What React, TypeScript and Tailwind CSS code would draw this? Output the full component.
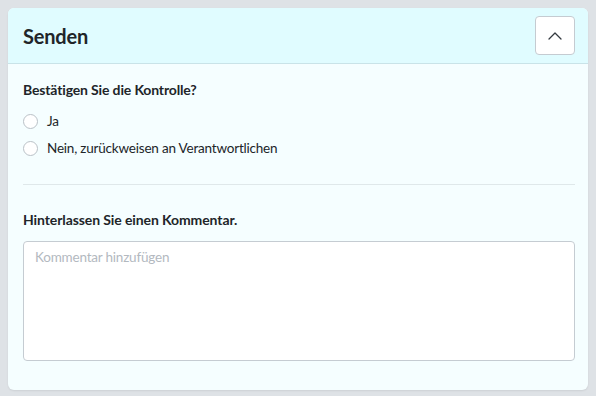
import { ChevronUp } from "lucide-react";

const options = ["Ja", "Nein, zurückweisen an Verantwortlichen"];

export default function App() {
  return (
    <div className="min-h-[396px] bg-[#dee2e6] p-2 font-['Lato',sans-serif] text-[#212529]">
      <div className="overflow-hidden rounded-md bg-[#f5feff] shadow-[0_1px_2px_rgba(0,0,0,0.08)]">
        <div className="flex h-[56px] items-center justify-between border-b border-[#c9e3e8] bg-[#e0fcff] pl-[15px] pr-[13px]">
          <h2 className="text-[20px] font-bold tracking-[-0.2px]">Senden</h2>
          <button className="flex h-[39px] w-[40px] items-center justify-center rounded-[4px] border border-[#c5cbd1] bg-white">
            <ChevronUp size={24} strokeWidth={1.3} className="text-[#343a40]" />
          </button>
        </div>

        <div className="pb-[29px] pl-[15px] pr-[13px] pt-[16px]">
          <p className="text-[14px] font-bold leading-[20px] tracking-[-0.15px]">Bestätigen Sie die Kontrolle?</p>
          <div className="mt-[11px] flex flex-col gap-[7px]">
            {options.map((o) => (
              <label key={o} className="flex h-[20px] items-center gap-[9px] text-[13.5px] tracking-[-0.2px]">
                <span className="h-[15px] w-[15px] rounded-full border border-[#b9c0c6] bg-white" />
                <span>{o}</span>
              </label>
            ))}
          </div>

          <hr className="mb-[25px] mt-[26px] border-[#dfe8ea]" />

          <p className="text-[14px] font-bold leading-[20px] tracking-[-0.1px]">Hinterlassen Sie einen Kommentar.</p>
          <textarea
            placeholder="Kommentar hinzufügen"
            className="mt-[11px] block h-[120px] w-full resize-none rounded-[4px] border border-[#c5ccd2] bg-white px-[11px] py-[5px] text-[13.5px] tracking-[-0.2px] placeholder:text-[#b3b9bf] focus:outline-none"
          />
        </div>
      </div>
    </div>
  );
}
